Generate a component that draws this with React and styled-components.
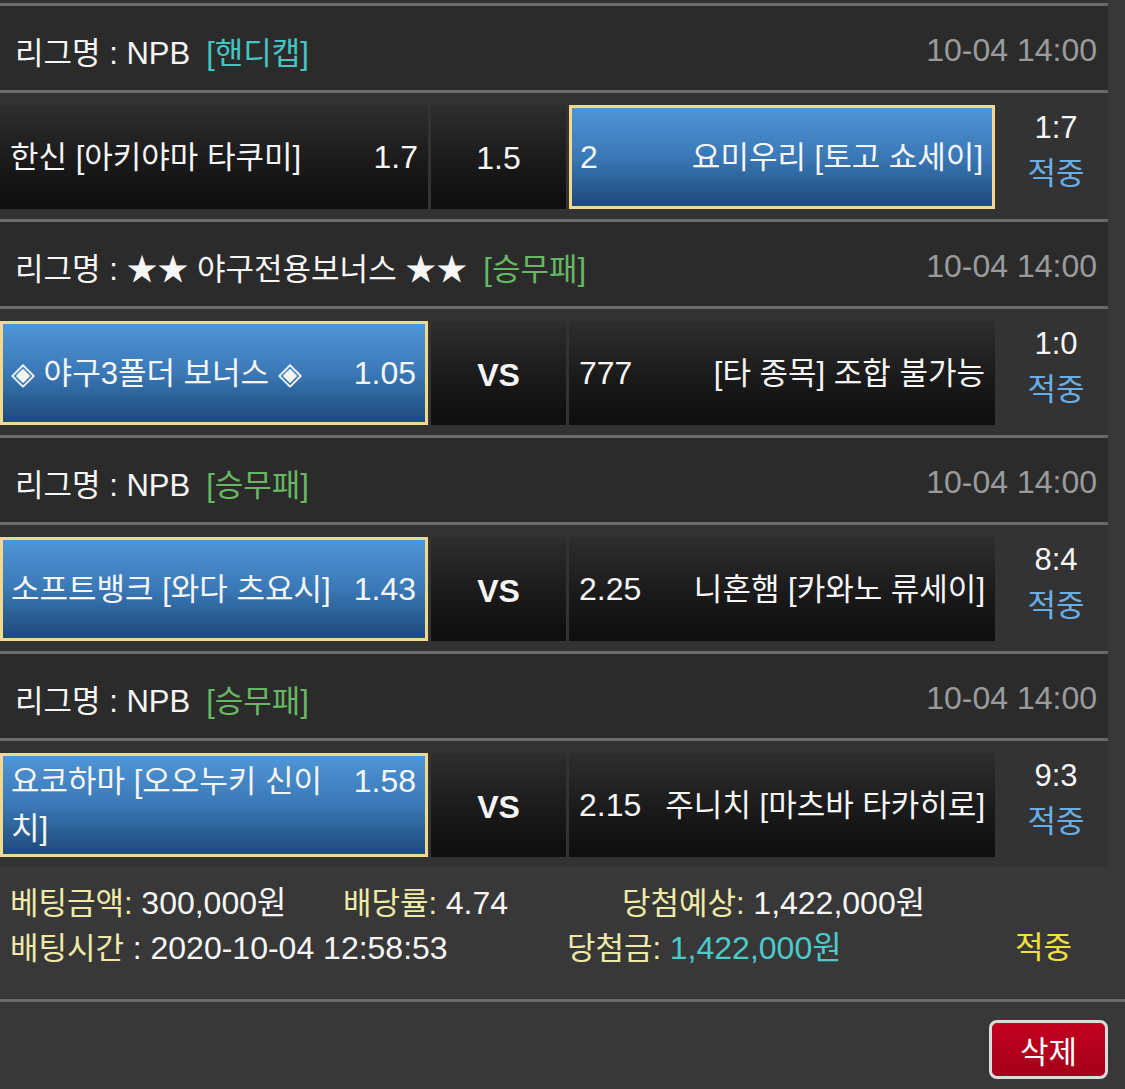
import React from 'react';
import styled, { createGlobalStyle } from 'styled-components';

const GlobalStyle = createGlobalStyle`
  html, body {
    margin: 0;
    padding: 0;
    background: #383838;
  }
  body {
    font-family: "Liberation Sans", "Noto Sans CJK KR", sans-serif;
    color: #f6f6f6;
    font-size: 31px;
  }
`;

const Page = styled.div`
  width: 1125px;
  min-height: 1089px;
  background: #383838;
`;

const List = styled.div`
  width: 1108px;
  background: #333333;
  padding-top: 3px;
`;

const Game = styled.section`
  border-top: 3px solid #6b6b6b;
`;

const Header = styled.div`
  box-sizing: border-box;
  height: 87px;
  background: #2b2b2b;
  border-bottom: 3px solid #6b6b6b;
  display: flex;
  align-items: center;
  justify-content: space-between;
  padding: 4px 11px 0 15px;
`;

const League = styled.div`
  white-space: nowrap;
`;

const Tag = styled.span`
  margin-left: 16px;
  color: ${({ kind }) => (kind === 'handicap' ? '#45c4c4' : '#66b862')};
`;

const Time = styled.div`
  color: #9b9b9b;
  font-size: 32px;
`;

const Row = styled.div`
  height: 104px;
  padding: 12px 0 10px;
  display: grid;
  grid-template-columns: 428px 135px 426px 1fr;
  column-gap: 3px;
`;

const Pick = styled.div`
  box-sizing: border-box;
  height: 104px;
  display: flex;
  align-items: center;
  background: ${({ selected }) =>
    selected
      ? 'linear-gradient(to bottom, #4f95d6 0%, #3a78b6 50%, #1d4a7a 100%)'
      : 'linear-gradient(to bottom, #2e2e2e 0%, #1a1a1a 55%, #0e0e0e 100%)'};
  border: ${({ selected }) => (selected ? '3px solid #f2d98c' : '0')};
  padding: ${({ selected }) => (selected ? '0 9px 0 8px' : '0 10px 0 10px')};
`;

const PickInner = styled.div`
  flex: 1;
  display: flex;
  align-items: baseline;
  justify-content: space-between;
  min-width: 0;
`;

const Name = styled.div`
  flex: 1;
  min-width: 0;
  line-height: 47px;
  text-align: ${({ right }) => (right ? 'right' : 'left')};
`;

const Odds = styled.div`
  flex: none;
  font-size: 32px;
  line-height: 47px;
  ${({ right }) => (right ? 'margin-left: 12px;' : 'margin-right: 12px;')}
`;

const Middle = styled.div`
  box-sizing: border-box;
  height: 104px;
  display: flex;
  align-items: center;
  justify-content: center;
  background: linear-gradient(to bottom, #2e2e2e 0%, #1a1a1a 55%, #0e0e0e 100%);
  font-size: 32px;
  font-weight: ${({ vs }) => (vs ? 700 : 400)};
  padding-top: ${({ vs }) => (vs ? '4px' : '2px')};
`;

const Score = styled.div`
  display: flex;
  flex-direction: column;
  align-items: center;
  justify-content: center;
  padding-left: 6px;
  line-height: 46px;
  margin-top: -12px;
`;

const Result = styled.span`
  color: #6aaee6;
`;

const Summary = styled.div`
  padding: 14px 0 28px 10px;
  border-bottom: 3px solid #6b6b6b;
`;

const SumRow = styled.div`
  display: grid;
  grid-template-columns: ${({ cols }) => cols};
  line-height: 44px;
  white-space: nowrap;
`;

const Label = styled.span`
  color: #efeaa8;
`;

const Value = styled.span`
  font-size: 32px;
  color: ${({ tone }) => (tone === 'cyan' ? '#4ccaca' : '#f6f6f6')};
`;

const Hit = styled.span`
  color: #f2e040;
`;

const Footer = styled.div`
  display: flex;
  justify-content: flex-end;
  padding: 18px 17px 12px 0;
`;

const DeleteButton = styled.button`
  width: 119px;
  height: 59px;
  border: 3px solid #dcdcdc;
  border-radius: 8px;
  background: linear-gradient(to bottom, #c2001f 0%, #a5001a 100%);
  color: #ffffff;
  font-family: inherit;
  font-size: 31px;
  padding: 0;
  cursor: pointer;
`;

const games = [
  {
    league: 'NPB',
    tag: '핸디캡',
    kind: 'handicap',
    home: '한신 [아키야마 타쿠미]',
    homeOdds: '1.7',
    mid: '1.5',
    away: '요미우리 [토고 쇼세이]',
    awayOdds: '2',
    pick: 'away',
    score: '1:7',
  },
  {
    league: '★★ 야구전용보너스 ★★',
    tag: '승무패',
    home: '◈ 야구3폴더 보너스 ◈',
    homeOdds: '1.05',
    mid: 'VS',
    away: '[타 종목] 조합 불가능',
    awayOdds: '777',
    pick: 'home',
    score: '1:0',
  },
  {
    league: 'NPB',
    tag: '승무패',
    home: '소프트뱅크 [와다 츠요시]',
    homeOdds: '1.43',
    mid: 'VS',
    away: '니혼햄 [카와노 류세이]',
    awayOdds: '2.25',
    pick: 'home',
    score: '8:4',
  },
  {
    league: 'NPB',
    tag: '승무패',
    home: '요코하마 [오오누키 신이치]',
    homeOdds: '1.58',
    mid: 'VS',
    away: '주니치 [마츠바 타카히로]',
    awayOdds: '2.15',
    pick: 'home',
    score: '9:3',
  },
];

const App = () => {
  return (
    <>
      <GlobalStyle />
      <Page>
        <List>
          {games.map((g, i) => (
            <Game key={i}>
              <Header>
                <League>
                  리그명 : {g.league}
                  <Tag kind={g.kind}>[{g.tag}]</Tag>
                </League>
                <Time>10-04 14:00</Time>
              </Header>
              <Row>
                <Pick selected={g.pick === 'home'}>
                  <PickInner>
                    <Name>{g.home}</Name>
                    <Odds right>{g.homeOdds}</Odds>
                  </PickInner>
                </Pick>
                <Middle vs={g.mid === 'VS'}>{g.mid}</Middle>
                <Pick selected={g.pick === 'away'}>
                  <PickInner>
                    <Odds>{g.awayOdds}</Odds>
                    <Name right>{g.away}</Name>
                  </PickInner>
                </Pick>
                <Score>
                  <span>{g.score}</span>
                  <Result>적중</Result>
                </Score>
              </Row>
            </Game>
          ))}
        </List>
        <Summary>
          <SumRow cols="333px 279px auto">
            <span><Label>베팅금액:</Label> <Value>300,000원</Value></span>
            <span><Label>배당률:</Label> <Value>4.74</Value></span>
            <span><Label>당첨예상:</Label> <Value>1,422,000원</Value></span>
          </SumRow>
          <SumRow cols="557px 448px auto">
            <span><Label>배팅시간</Label> <Value>: 2020-10-04 12:58:53</Value></span>
            <span><Label>당첨금:</Label> <Value tone="cyan">1,422,000원</Value></span>
            <Hit>적중</Hit>
          </SumRow>
        </Summary>
        <Footer>
          <DeleteButton>삭제</DeleteButton>
        </Footer>
      </Page>
    </>
  );
};

export default App;
